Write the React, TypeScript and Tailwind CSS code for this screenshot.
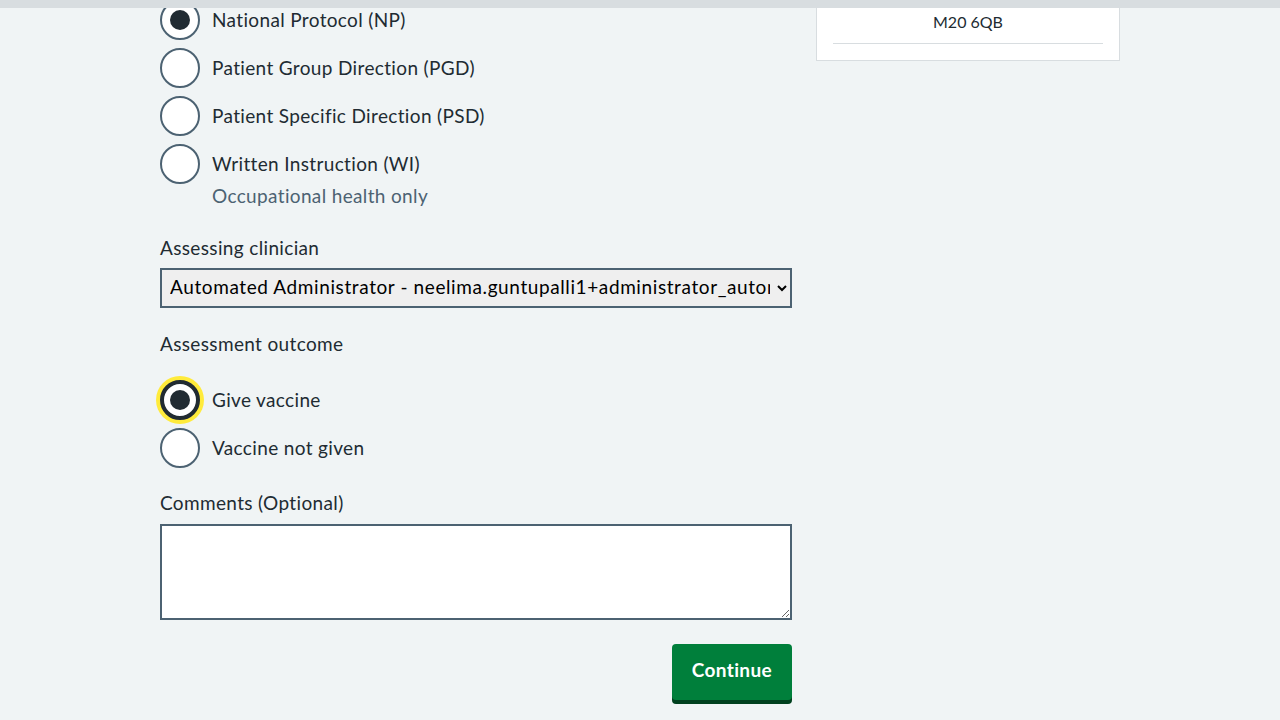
import React from "react";

const FONT = "font-['Lato','Liberation_Sans',sans-serif]";

function Radio({ label, checked, focused, hint }: { label: string; checked?: boolean; focused?: boolean; hint?: string }) {
  return (
    <div className="flex items-start">
      <span
        className={`relative flex h-10 w-10 shrink-0 items-center justify-center rounded-full bg-white ${
          focused ? "border-4 border-[#212b32] shadow-[0_0_0_4px_#ffeb3b]" : "border-2 border-[#4c6272]"
        }`}
      >
        {checked && <span className="h-5 w-5 rounded-full bg-[#212b32]" />}
      </span>
      <div className="ml-3 pt-[6px]">
        <div className="text-[19px] leading-7 tracking-[0.35px] text-[#212b32]">{label}</div>
        {hint && <div className="mt-1 text-[19px] leading-7 tracking-[0.35px] text-[#4c6272]">{hint}</div>}
      </div>
    </div>
  );
}

export default function App() {
  return (
    <div className={`relative min-h-[720px] bg-[#f0f4f5] ${FONT}`}>
      <div className="absolute left-0 top-0 z-10 h-2 w-full bg-[#d8dde0]" />
      <div className="mx-auto flex w-[960px] gap-6">
        <div className="w-[632px]">
          {/* Protocol */}
          <div className="flex flex-col gap-2">
            <Radio label="National Protocol (NP)" checked />
            <Radio label="Patient Group Direction (PGD)" />
            <Radio label="Patient Specific Direction (PSD)" />
            <Radio label="Written Instruction (WI)" hint="Occupational health only" />
          </div>

          {/* Clinician */}
          <div className="mt-[24px]">
            <label className="mb-[6px] block text-[19px] leading-7 tracking-[0.35px] text-[#212b32]">Assessing clinician</label>
            <select className="h-10 w-full border-2 border-[#4c6272] bg-[#efefef] pb-1 pl-1 pr-1 text-[19px] tracking-[0.6px] text-black outline-none">
              <option>Automated Administrator - neelima.guntupalli1+administrator_automation@nhs.net</option>
            </select>
          </div>

          {/* Outcome */}
          <div className="mt-[22px]">
            <div className="mb-[22px] text-[19px] leading-7 tracking-[0.35px] text-[#212b32]">Assessment outcome</div>
            <div className="flex flex-col gap-2">
              <Radio label="Give vaccine" checked focused />
              <Radio label="Vaccine not given" />
            </div>
          </div>

          {/* Comments */}
          <div className="mt-[21px]">
            <label className="mb-[7px] block text-[19px] leading-7 tracking-[0.35px] text-[#212b32]">Comments (Optional)</label>
            <textarea className="block h-24 w-full border-2 border-[#4c6272] bg-white p-1 text-[19px] outline-none" />
          </div>

          <div className="mt-6 flex justify-end">
            <button className="h-14 rounded bg-[#007f3b] px-5 pb-1 text-[19px] font-bold tracking-[0.35px] text-white shadow-[0_4px_0_#00401e]">
              Continue
            </button>
          </div>
        </div>

        <div className="w-[304px]">
          <div className="border border-[#d8dde0] bg-white px-4 pb-4 pt-[9px]">
            <div className="border-b border-[#d8dde0] pb-[9px] text-center text-[16px] leading-6 text-[#212b32]">M20 6QB</div>
          </div>
        </div>
      </div>
    </div>
  );
}
